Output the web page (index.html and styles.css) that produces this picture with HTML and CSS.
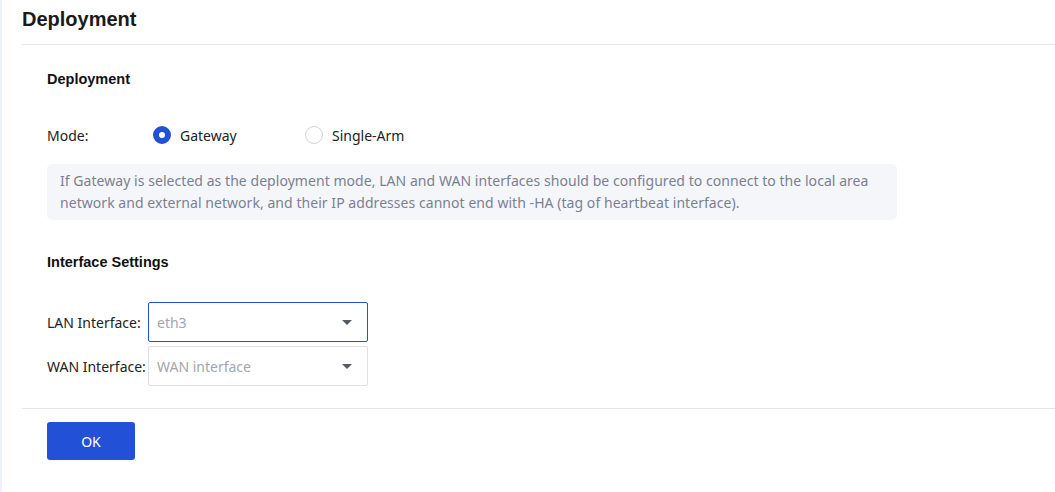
FILE: index.html
```html
<!DOCTYPE html>
<html lang="en">
<head>
    <meta charset="UTF-8">
    <title>Deployment</title>
    <link rel="stylesheet" href="styles.css">
</head>
<body>
    <div class="page">
        <div class="page-header">
            <h1>Deployment</h1>
        </div>

        <div class="page-body">
            <h2 class="section-title">Deployment</h2>

            <div class="form-row mode-row">
                <span class="label">Mode:</span>
                <label class="radio checked"><span class="dot"></span>Gateway</label>
                <label class="radio"><span class="dot"></span>Single-Arm</label>
            </div>

            <div class="tip">
                If Gateway is selected as the deployment mode, LAN and WAN interfaces should be configured to connect to the local area
                network and external network, and their IP addresses cannot end with -HA (tag of heartbeat interface).
            </div>

            <h2 class="section-title settings-title">Interface Settings</h2>

            <div class="fields">
                <div class="form-row">
                    <span class="label">LAN Interface:</span>
                    <div class="select active">
                        <span>eth3</span>
                        <span class="caret"></span>
                    </div>
                </div>
                <div class="form-row">
                    <span class="label">WAN Interface:</span>
                    <div class="select">
                        <span>WAN interface</span>
                        <span class="caret"></span>
                    </div>
                </div>
            </div>
        </div>

        <div class="page-footer">
            <button class="btn-primary">OK</button>
        </div>
    </div>
</body>
</html>
```

FILE: styles.css
```css
:root {
    --primary: #2251d8;
    --text: #222222;
    --muted: #7b8190;
    --line: #e3e6ec;
}

body {
    margin: 0;
    font-family: "Noto Sans", "Liberation Sans", Arial, sans-serif;
    color: var(--text);
    background: #ffffff;
}

.page {
    border-left: 2px solid #eef3fa;
    min-height: 492px;
    padding-left: 20px;
}

.page-header {
    height: 45px;
    border-bottom: 1px solid var(--line);
    display: flex;
    align-items: center;
    padding-bottom: 6px;
    box-sizing: border-box;
}

.page-header h1 {
    margin: 0;
    font-family: "Liberation Sans", Arial, sans-serif;
    font-size: 20px;
    font-weight: bold;
    color: #1a1a1a;
}

.page-body {
    padding: 24px 0 22px 25px;
    border-bottom: 1px solid var(--line);
}

.section-title {
    margin: 0;
    font-family: "Liberation Sans", Arial, sans-serif;
    font-size: 14.5px;
    font-weight: bold;
    color: #111111;
    line-height: 20px;
}

.form-row {
    display: flex;
    align-items: center;
    font-size: 14px;
}

.mode-row {
    margin-top: 36px;
    height: 20px;
}

.label {
    width: 101px;
    color: #222222;
}

.mode-row .label {
    width: 106px;
}

.radio {
    display: flex;
    align-items: center;
    gap: 9px;
    width: 152px;
    color: #222222;
}

.radio .dot {
    width: 18px;
    height: 18px;
    border: 1px solid #d0d3d9;
    border-radius: 50%;
    box-sizing: border-box;
    background: #ffffff;
}

.radio.checked .dot {
    border: 6px solid var(--primary);
}

.tip {
    margin-top: 19px;
    width: 850px;
    box-sizing: border-box;
    padding: 6px 13px;
    background: #f5f6fa;
    border-radius: 5px;
    color: var(--muted);
    font-size: 14px;
    line-height: 22px;
    letter-spacing: 0.05px;
}

.settings-title {
    margin-top: 32px;
}

.fields {
    margin-top: 30px;
    display: flex;
    flex-direction: column;
    gap: 4px;
}

.select {
    width: 220px;
    height: 40px;
    box-sizing: border-box;
    border: 1px solid #dfe1e5;
    border-radius: 2px;
    display: flex;
    align-items: center;
    justify-content: space-between;
    padding: 0 15px 0 8px;
    color: #a3a6ad;
}

.select.active {
    border-color: var(--primary);
}

.caret {
    width: 0;
    height: 0;
    border-left: 5px solid transparent;
    border-right: 5px solid transparent;
    border-top: 5px solid #555a63;
}

.page-footer {
    padding: 13px 0 0 25px;
}

.btn-primary {
    width: 88px;
    height: 38px;
    border: none;
    border-radius: 3px;
    background: var(--primary);
    color: #ffffff;
    font-family: "Noto Sans", "Liberation Sans", Arial, sans-serif;
    font-size: 14px;
    cursor: pointer;
}
```
